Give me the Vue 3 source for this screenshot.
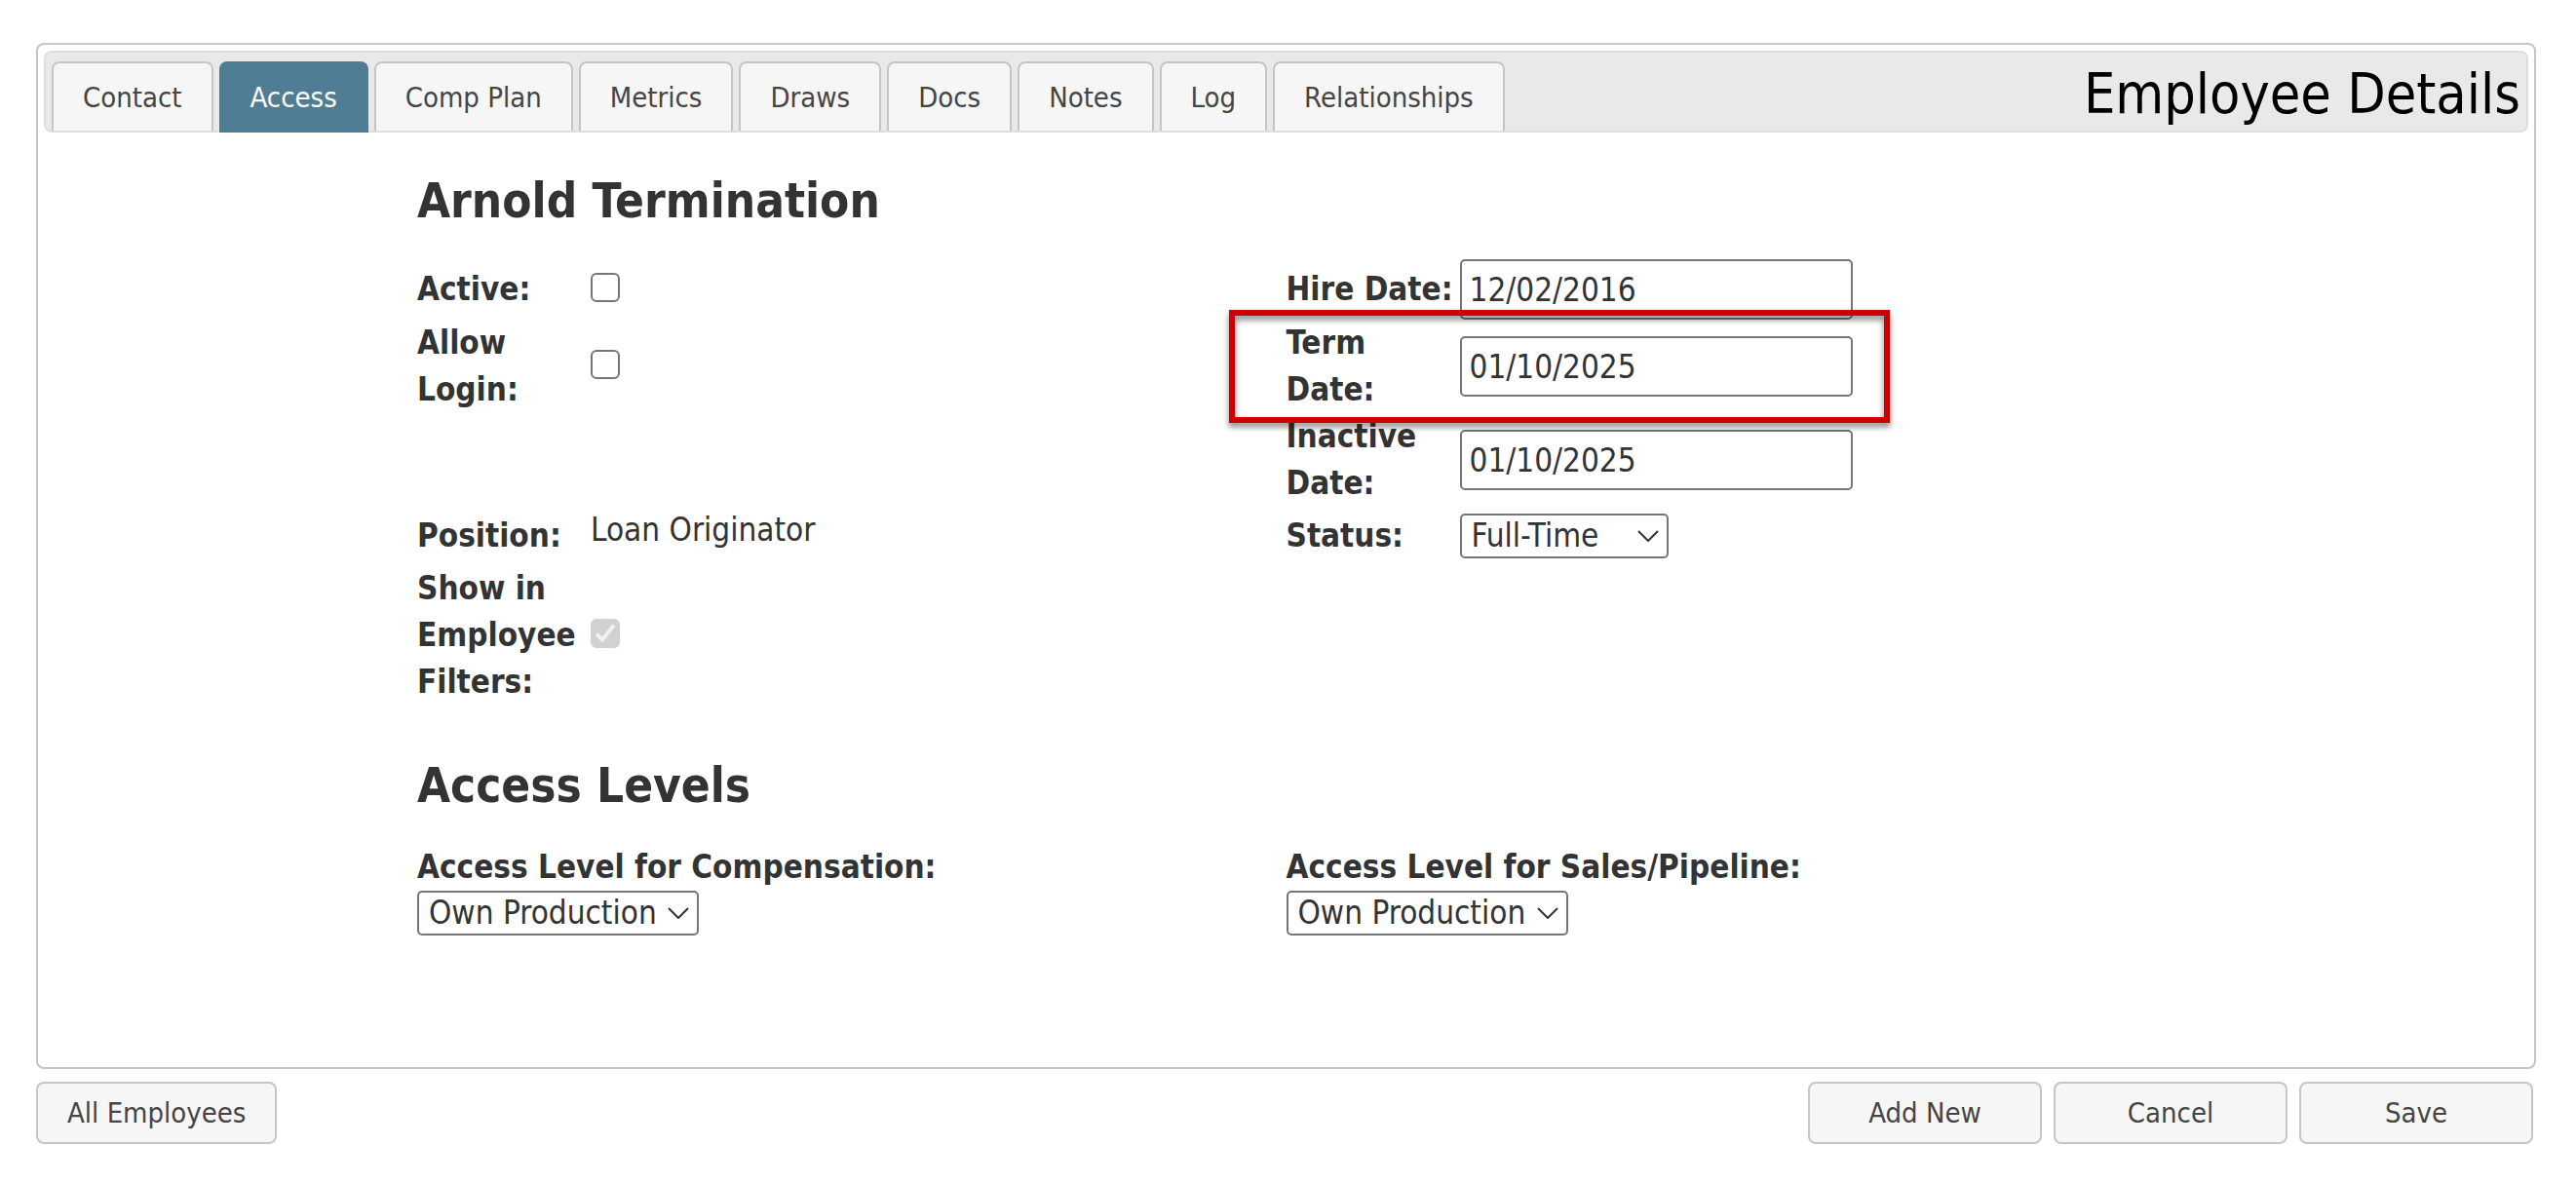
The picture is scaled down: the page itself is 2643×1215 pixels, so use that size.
<script setup>
import { ref } from 'vue'

const tabs = ['Contact', 'Access', 'Comp Plan', 'Metrics', 'Draws', 'Docs', 'Notes', 'Log', 'Relationships']
const activeTab = ref('Access')

const employee = ref({
  name: 'Arnold Termination',
  active: false,
  allowLogin: false,
  position: 'Loan Originator',
  showInFilters: true,
  hireDate: '12/02/2016',
  termDate: '01/10/2025',
  inactiveDate: '01/10/2025',
  status: 'Full-Time',
  compensationLevel: 'Own Production',
  salesLevel: 'Own Production'
})
</script>

<template>
  <main class="page">
    <section class="panel">
      <header class="bar">
        <nav class="tabs" role="tablist">
          <button
            v-for="tab in tabs"
            :key="tab"
            type="button"
            role="tab"
            class="tab"
            :class="{ active: tab === activeTab }"
            :aria-selected="tab === activeTab"
            @click="activeTab = tab"
          >{{ tab }}</button>
        </nav>
        <h1 class="title">Employee Details</h1>
      </header>

      <form class="content" @submit.prevent>
        <h2 class="heading">{{ employee.name }}</h2>

        <div class="fields">
          <label for="active">Active:</label>
          <span class="check"><input id="active" v-model="employee.active" type="checkbox"></span>
          <label for="hire">Hire Date:</label>
          <input id="hire" v-model="employee.hireDate" class="date" type="text">

          <label for="login">Allow Login:</label>
          <span class="check"><input id="login" v-model="employee.allowLogin" type="checkbox"></span>
          <label for="term">Term Date:</label>
          <input id="term" v-model="employee.termDate" class="date" type="text">

          <label for="inactive" class="right">Inactive Date:</label>
          <input id="inactive" v-model="employee.inactiveDate" class="date" type="text">

          <span class="label">Position:</span>
          <span class="value">{{ employee.position }}</span>
          <label for="status">Status:</label>
          <span class="select status">
            <select id="status" v-model="employee.status">
              <option>Full-Time</option>
              <option>Part-Time</option>
            </select>
            <svg class="chevron" viewBox="0 0 22 12" aria-hidden="true"><path d="M1 1l10 10L21 1" /></svg>
          </span>

          <label for="filters">Show in Employee Filters:</label>
          <span class="check">
            <input id="filters" v-model="employee.showInFilters" type="checkbox" disabled>
            <svg v-if="employee.showInFilters" class="tick" viewBox="0 0 30 30" aria-hidden="true"><path d="M6 15.500l6 6L24 6.500" /></svg>
          </span>

          <div class="highlight" aria-hidden="true"></div>
        </div>

        <h2 class="heading">Access Levels</h2>

        <div class="levels">
          <div class="level">
            <label for="compensation">Access Level for Compensation:</label>
            <span class="select">
              <select id="compensation" v-model="employee.compensationLevel">
                <option>Own Production</option>
              </select>
              <svg class="chevron" viewBox="0 0 22 12" aria-hidden="true"><path d="M1 1l10 10L21 1" /></svg>
            </span>
          </div>
          <div class="level">
            <label for="sales">Access Level for Sales/Pipeline:</label>
            <span class="select">
              <select id="sales" v-model="employee.salesLevel">
                <option>Own Production</option>
              </select>
              <svg class="chevron" viewBox="0 0 22 12" aria-hidden="true"><path d="M1 1l10 10L21 1" /></svg>
            </span>
          </div>
        </div>
      </form>
    </section>

    <footer class="actions">
      <button type="button" class="all">All Employees</button>
      <button type="button" class="action">Add New</button>
      <button type="button" class="action">Cancel</button>
      <button type="button" class="action">Save</button>
    </footer>
  </main>
</template>

<style>
body {
  background: #fff;
}
</style>

<style scoped>
* {
  box-sizing: border-box;
}

.page {
  padding: 44px 41px 40px 37px;
  color: #333;
  font-family: "DejaVu Sans Condensed", "DejaVu Sans", sans-serif;
  font-size: 33px;
  line-height: 48px;
}

button,
input,
select {
  margin: 0;
  color: inherit;
  font: inherit;
}

.panel {
  padding: 6px 6px 135px;
  border: 2px solid #c5c5c5;
  border-radius: 8px;
}

.bar {
  display: flex;
  justify-content: space-between;
  height: 84px;
  padding: 0 6px;
  border: 2px solid #ddd;
  border-radius: 8px;
  background: #e9e9e9;
}

.tabs {
  display: flex;
  gap: 6px;
  padding-top: 9px;
}

.tab {
  padding: 0 30px;
  border: 2px solid #c5c5c5;
  border-bottom: 0;
  border-radius: 8px 8px 0 0;
  background: #f6f6f6;
  color: #454545;
  font-size: 29px;
  white-space: nowrap;
}

.tab.active {
  margin-bottom: -2px;
  padding-bottom: 2px;
  border-color: #4f7d93;
  background: #4f7d93;
  color: #fff;
}

.title {
  align-self: center;
  margin: 0;
  padding-top: 4px;
  color: #000;
  font-size: 57px;
  font-weight: normal;
  line-height: 72px;
  white-space: nowrap;
}

.content {
  max-width: 1783px;
  margin: 35px auto 0;
}

.heading {
  margin: 0 0 23px;
  font-size: 49px;
  font-weight: bold;
  line-height: 72px;
}

.fields {
  position: relative;
  display: grid;
  grid-template-columns: 178px 1fr 178px 1fr;
  grid-auto-rows: minmax(60px, auto);
  align-items: center;
  margin-bottom: 47px;
}

label,
.label {
  font-weight: bold;
}

.fields label {
  padding-right: 4px;
}

.right {
  grid-column: 3;
}

.value {
  align-self: start;
}

.check {
  position: relative;
  display: flex;
  width: 30px;
  margin-bottom: 4px;
}

.check input {
  width: 30px;
  height: 30px;
  border: 2px solid #767676;
  border-radius: 6px;
  background: #fff;
  appearance: none;
}

.check input:checked {
  border-color: #d1d1d1;
  background: #d1d1d1;
}

.tick {
  position: absolute;
  inset: 0;
  fill: none;
  stroke: #f0f0f0;
  stroke-width: 4;
}

.date {
  width: 403px;
  height: 62px;
  padding: 0 8px;
  border: 2px solid #767676;
  border-radius: 5px;
  background: #fff;
}

.select {
  position: relative;
  display: flex;
  width: 289px;
}

.select.status {
  width: 214px;
}

.select select {
  width: 100%;
  height: 46px;
  padding: 0 10px;
  border: 2px solid #767676;
  border-radius: 5px;
  background: #fff;
  line-height: 40px;
  appearance: none;
}

.chevron {
  position: absolute;
  top: 17px;
  right: 10px;
  width: 22px;
  height: 12px;
  fill: none;
  stroke: #333;
  stroke-width: 2;
  pointer-events: none;
}

/* Callout frame around the Term Date row */
.highlight {
  position: absolute;
  grid-row: 2;
  grid-column: 3 / 5;
  top: -10px;
  left: -59px;
  width: 678px;
  height: 116px;
  border: 6px solid #c00;
  filter: drop-shadow(0 4px 3px rgba(0, 0, 0, 0.5));
  pointer-events: none;
}

.levels {
  display: grid;
  grid-template-columns: 1fr 1fr;
}

.level {
  display: flex;
  flex-direction: column;
}

.actions {
  display: flex;
  gap: 12px;
  margin-top: 13px;
  padding-right: 3px;
}

.actions button {
  height: 64px;
  padding: 0 30px;
  border: 2px solid #c5c5c5;
  border-radius: 8px;
  background: #f6f6f6;
  color: #454545;
  font-size: 29px;
}

.actions .all {
  margin-right: auto;
}

.actions .action {
  width: 240px;
}
</style>
